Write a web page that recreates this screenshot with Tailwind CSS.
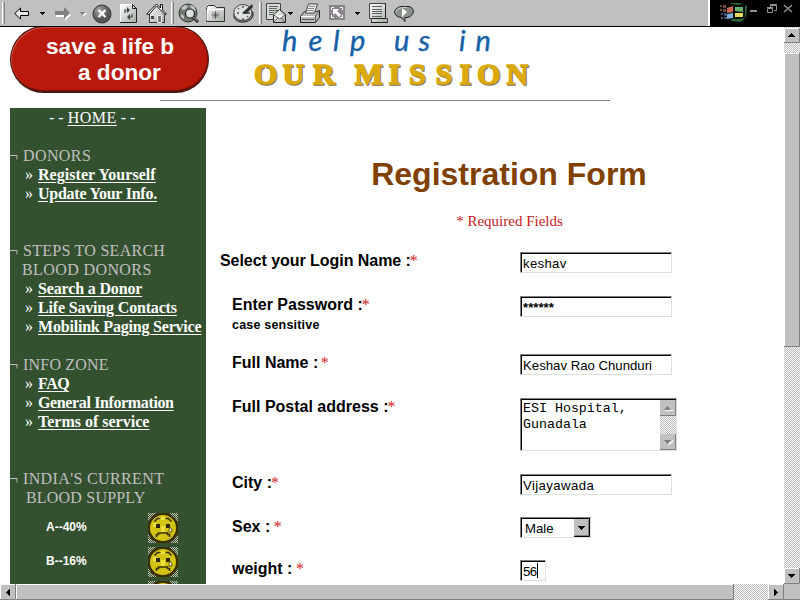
<!DOCTYPE html>
<html lang="en">
<head>
<meta charset="utf-8">
<title>Registration Form</title>
<script src="https://cdn.jsdelivr.net/npm/@tailwindcss/browser@4"></script>
</head>
<body class="w-[800px] h-[600px] overflow-hidden bg-white flex flex-col font-['Liberation_Sans',sans-serif] text-black">
<svg width="0" height="0" class="absolute">
  <defs>
    <pattern id="dither" width="2" height="2" patternUnits="userSpaceOnUse"><path fill="#fff" d="M0 0h2v2H0z"/><path fill="#b8b8b8" d="M0 0h1v1H0zM1 1h1v1H1z"/></pattern>
    <pattern id="dark" width="2" height="2" patternUnits="userSpaceOnUse"><path fill="#334a2c" d="M0 0h2v2H0z"/><path fill="#c5ccc0" d="M0 0h1v1H0zM1 1h1v1H1z"/></pattern>
    <radialGradient id="ball" cx=".35" cy=".3"><stop offset="0" stop-color="#aaa"/><stop offset="1" stop-color="#555"/></radialGradient>
    <linearGradient id="paper" x2="1" y2="1"><stop offset="0" stop-color="#fff"/><stop offset="1" stop-color="#a3aaa3"/></linearGradient>
    <symbol id="sad" viewBox="0 0 30 30">
      <path fill="url(#dark)" d="M0 0h30v30H0z"/>
      <path fill="#3a3000" d="M9 0h12l6 5 3 5v11l-4 6-5 3H9l-6-4-3-6V9l4-6z"/>
      <circle cx="15" cy="15" r="13" fill="#d3c414"/>
      <path fill="#eee03a" d="M5 10h4v4H5zM11 4h6v3h-6zM13 13h4v6h-4z"/>
      <path fill="#2c2700" d="M8 11h4v4H8zM18 11h4v4h-4z"/>
      <path fill="none" stroke="#3a3300" stroke-width="1.7" d="M6.500 8.500l3-3h3M17.500 5.500h3l3 3M8.500 24v-2.500h2V20h9v1.500h2V24"/>
      <path fill="#e8e8c8" stroke="#4a4200" stroke-width=".8" d="M22 14l2 3v2h-3v-2z"/>
    </symbol>
  </defs>
</svg>

<header class="h-[27px] shrink-0 flex border-b border-black bg-[#c0c0c0]">
  <div class="w-[708px] flex items-start pt-[2px]">
    <svg class="ml-[2px]" width="3" height="22"><path fill="#fff" d="M0 0h1v22H0z"/><path fill="#808080" d="M2 0h1v22H2z"/></svg>
    <svg class="ml-[9px]" width="16" height="23"><path fill="#e8e8e8" stroke="#000" d="M.7 11.500L6.500 6v3.500h8v4h-8V17z"/></svg>
    <svg class="ml-[10px]" width="6" height="23"><path d="M0 10h5v1H4v1H3v1H2v-1H1v-1H0z"/></svg>
    <svg class="ml-[9px]" width="17" height="23"><path fill="#fff" d="M1 10h9V7l6 6-6 6v-4H1z"/><path fill="#808080" d="M0 9h9V5l6 6-6 6v-4H0z"/></svg>
    <svg class="ml-[8px]" width="7" height="23"><path fill="#fff" d="M1 11h6l-3 3z"/><path fill="#808080" d="M0 10h5v1H4v1H3v1H2v-1H1v-1H0z"/></svg>
    <svg class="ml-[5px]" width="20" height="23"><circle cx="10" cy="12" r="9" fill="url(#ball)" stroke="#303430"/><path fill="none" stroke="#fff" stroke-width="2.200" d="M6.500 8l7 7M13.500 8l-7 7"/></svg>
    <svg class="ml-[8px]" width="18" height="23"><path fill="url(#paper)" d="M.5 2.500h12l4 4v14H.5z"/><path fill="none" stroke="#fff" d="M.5 20V2.500h12"/><path fill="none" stroke="#222" d="M12.500 2.500v4h4v14H0M12.500 2.500l4 4"/><path fill="none" stroke="#3c443c" stroke-width="1.200" d="M5 11V8h2M12 12v3h-2"/><path fill="#3c443c" d="M7 5l3 3-3 3zM10 12v6l-3-3z"/></svg>
    <svg class="ml-[8px]" width="21" height="23"><path fill="url(#paper)" stroke="#333" d="M3.500 11v9.500h15V11L10.500 3z"/><path fill="#fff" stroke="#111" d="M.7 12L10.500 2l4 4V2.500h2V8l4 4-1.500.5L10.500 4 3 12.500z"/><path fill="#777" stroke="#eee" d="M11.500 13.500h4v7h-4z"/><path fill="#444" d="M5 14h3v3H5z"/></svg>
    <svg class="ml-[4px]" width="3" height="22"><path fill="#fff" d="M0 0h1v22H0z"/><path fill="#808080" d="M2 0h1v22H2z"/></svg>
    <svg class="ml-[4px]" width="22" height="23"><circle cx="10" cy="11" r="9" fill="#737873" stroke="#383c38"/><path fill="#bfc7bf" d="M3 6l4-3 3 1-2 3-3 1zM12 3l4 1 2 5-5-2zM3 12l3 2v3l-3-2z"/><circle cx="12" cy="11.500" r="4.500" fill="#dbe1db" stroke="#222" stroke-width="1.200"/><path stroke="#222" stroke-width="3" d="M15 15l5 5"/><path stroke="#ccc" d="M15.500 15l4 4"/></svg>
    <svg class="ml-[6px]" width="21" height="23"><path fill="url(#paper)" stroke="#333" d="M.5 19.500V5.500l2-2h6l2 2h8v14z"/><path fill="none" stroke="#fff" d="M1 18.500v-11h17"/><path stroke="#444" stroke-width=".8" d="M9.500 9v8M5.500 13h8M6.500 10l6 6M12.500 10l-6 6"/></svg>
    <svg class="ml-[6px]" width="22" height="23"><path fill="#888" stroke="#222" d="M1 12v3c2 7 16 7 19-1v-4z"/><ellipse cx="9.800" cy="10.500" rx="9" ry="8" fill="#dde1dd" stroke="#444"/><path stroke="#555" stroke-width="1.500" d="M10 4v2M4 11h2M10 16v2M15 15l-1-1M5 6l1 1"/><path fill="#333" d="M9 11l10-9 1 3-7 7z"/><path stroke="#333" stroke-width="1.500" d="M10 11h7"/></svg>
    <svg class="ml-[4px]" width="3" height="22"><path fill="#fff" d="M0 0h1v22H0z"/><path fill="#808080" d="M2 0h1v22H2z"/></svg>
    <svg class="ml-[4px]" width="21" height="23"><path fill="#d6dad6" stroke="#444" d="M.5 1.500h14v16H.5z"/><path stroke="#5e665e" d="M3 4.500h9M3 6.500h8M3 8.500h9M3 10.500h5M3 12.500h4"/><path fill="url(#paper)" stroke="#222" d="M7.500 20.500v-8l6-5 6 5v8z"/><path fill="#f4f4f4" stroke="#666" d="M8 13l5.500 4 5.500-4M8 20l4-4M19 20l-4-4"/></svg>
    <svg class="ml-[1px]" width="6" height="23"><path d="M0 10h5v1H4v1H3v1H2v-1H1v-1H0z"/></svg>
    <svg class="ml-[6px]" width="20" height="23"><path fill="#b8bcb8" stroke="#222" d="M.5 14.500l4-5h12l3-1v7l-4 5H.5z"/><path fill="#f1f1f1" stroke="#444" d="M5.500 11l3-9h9l-3 9z"/><path stroke="#888" d="M9 4.500h6M8 6.500h6M7 8.500h7"/><path stroke="#fff" d="M1 14.500h14"/><path stroke="#555" d="M2 17.500h12M15.500 14l3-4M15.500 14v6"/></svg>
    <svg class="ml-[9px]" width="17" height="23"><path fill="#8a858a" d="M0 3h16v15H0z"/><path fill="none" stroke="#fff" d="M2.500 8V5.500H5M11 5.500h2.500V8M13.500 13v2.500H11M5 15.500H2.500V13"/><path fill="#fff" d="M4 7h6L8 9l4 4-2 2-4-4-2 2z"/></svg>
    <svg class="ml-[9px]" width="6" height="23"><path d="M0 10h5v1H4v1H3v1H2v-1H1v-1H0z"/></svg>
    <svg class="ml-[7px]" width="20" height="23"><path fill="url(#paper)" stroke="#444" d="M1.500 1.500h16v15h2v4h-16v-4h-2z"/><path stroke="#5e665e" d="M4 4.500h10M4 7.500h10M4 9.500h10M4 11.500h10M4 14.500h10"/><path fill="none" stroke="#222" d="M17.500 1v15.500h-14M3 20.500h17"/></svg>
    <svg class="ml-[6px]" width="21" height="23"><path fill="#8d948d" stroke="#222" d="M7 4.500h8c6 2 6 8-1 11h-3v4l-4-4C-2 14-1 6 7 4.500z"/><path fill="none" stroke="#d5d9d5" d="M2 10c1-4 6-5 11-4.500"/><path fill="#fff" d="M8 6l5 4-5 5z"/></svg>
  </div>
  <div class="w-[2px] bg-white"></div>
  <div class="w-[90px] bg-black">
    <svg width="90" height="26">
      <path fill="#734a3a" d="M10 5h2v2h-2zM13 5h3v3h-3zM10 9h2v2h-2zM13 9h3v3h-3z"/><path fill="#3b5878" d="M11 13h2v2h-2zM14 13h3v3h-3zM11 17h2v2h-2zM14 17h3v2h-3z"/>
      <path fill="#2c6535" d="M21 3h9l7 3-1 11-5 5-10-1z"/>
      <path fill="#0a0a0a" d="M16 6l7-2 4 1 8-1v14l-8 1-4 0-6 2z"/>
      <path fill="#cf6650" d="M17 8l6-2v6l-6 1z"/><path fill="#68b070" d="M25 7l8 0v5l-8-1z"/><path fill="#7dafd8" d="M17 14l6-1v5l-6 1z"/><path fill="#e8da62" d="M25 13h8v4h-8z"/>
      <path fill="#909090" d="M40 10h7v2h-7z"/><g fill="none" stroke="#909090"><path d="M60.500 8V5.500h6v5H64M60 4.500h7M57.500 8.500h5v4h-5zM57 7.500h6"/></g><path stroke="#909090" stroke-width="1.500" d="M74 5l8 7M82 5l-8 7"/>
    </svg>
  </div>
</header>

<div class="flex h-[557px] shrink-0">
  <div class="w-[784px] h-full overflow-hidden">
    <div class="h-[81px] pl-[10px] flex">
      <div class="w-[199px] h-[67px] -mt-px rounded-full bg-[#b9190b] border border-[#4a1512] border-b-2 shadow-[inset_1px_1px_0_#c9523f,inset_-1px_-1px_0_#7d1008] text-white font-bold text-[22.6px] leading-[26px] pt-[7px] whitespace-pre"><div class="pl-[35px]">save a life b</div><div class="pl-[67px]">a donor</div></div>
      <svg class="-ml-[49px] overflow-visible" width="460" height="81">
        <g transform="translate(-160 -27)">
          <text y="50.500" x="282 308.500 333 350 370 394 418.500 440 459 475.500" font-family="Lato" font-style="italic" font-size="29" fill="#1560a8" stroke="#1560a8" stroke-width=".4">help us in</text>
          <g font-family="Liberation Serif" font-weight="bold" font-size="30">
            <text y="84" x="254 282.500 313 340 354.500 388.500 409 435.500 459.500 477 506.500" fill="#6c6450" stroke="#777061" stroke-width="1.400" transform="translate(.8 1.200)">OUR MISSION</text>
            <text y="84" x="254 282.500 313 340 354.500 388.500 409 435.500 459.500 477 506.500" fill="#dba90a" stroke="#dba90a" stroke-width="1.400">OUR MISSION</text>
          </g>
          <path fill="#fff" d="M265 67h1v15h-1zM488.500 67h1v15h-1z"/>
          <path fill="#848084" d="M160 100h450v1H160z"/>
        </g>
      </svg>
    </div>
    <div class="flex pl-[10px]">
      <nav class="w-[196px] h-[476px] flex flex-col overflow-hidden shrink-0 bg-[#33502f] text-white font-['Liberation_Serif',serif] text-[16px] leading-[19px] whitespace-pre">
        <div class="pl-[39px] h-[38px] shrink-0">- - <a class="underline underline-offset-2 tracking-[0.5px]">HOME</a> - -</div>
        <div class="text-[#c0c0c0] flex shrink-0"><span class="w-[14px] -ml-px">¬</span><span class="tracking-[0.4px]">DONORS</span></div>
        <div class="pl-[15px] flex shrink-0 gap-[5px]">»<a class="underline underline-offset-2 font-bold tracking-[0.05px]">Register Yourself</a></div>
        <div class="pl-[15px] h-[57px] flex shrink-0 gap-[5px]">»<a class="underline underline-offset-2 font-bold tracking-[-0.25px]">Update Your Info.</a></div>
        <div class="text-[#c0c0c0] flex shrink-0"><span class="w-[14px] -ml-px">¬</span><span class="tracking-[0.27px]">STEPS TO SEARCH</span></div>
        <div class="text-[#c0c0c0] shrink-0 pl-[12px] tracking-[0.4px]">BLOOD DONORS</div>
        <div class="pl-[15px] flex shrink-0 gap-[5px]">»<a class="underline underline-offset-2 font-bold tracking-[-0.15px]">Search a Donor</a></div>
        <div class="pl-[15px] flex shrink-0 gap-[5px]">»<a class="underline underline-offset-2 font-bold tracking-[-0.17px]">Life Saving Contacts</a></div>
        <div class="pl-[15px] h-[38px] flex shrink-0 gap-[5px]">»<a class="underline underline-offset-2 font-bold tracking-[-0.2px]">Mobilink Paging Service</a></div>
        <div class="text-[#c0c0c0] flex shrink-0"><span class="w-[14px] -ml-px">¬</span><span class="tracking-[0.2px]">INFO ZONE</span></div>
        <div class="pl-[15px] flex shrink-0 gap-[5px]">»<a class="underline underline-offset-2 font-bold tracking-[-0.4px]">FAQ</a></div>
        <div class="pl-[15px] flex shrink-0 gap-[5px]">»<a class="underline underline-offset-2 font-bold tracking-[-0.37px]">General Information</a></div>
        <div class="pl-[15px] h-[57px] flex shrink-0 gap-[5px]">»<a class="underline underline-offset-2 font-bold">Terms of service</a></div>
        <div class="text-[#c0c0c0] flex shrink-0"><span class="w-[14px] -ml-px">¬</span><span class="tracking-[0.37px]">INDIA'S CURRENT</span></div>
        <div class="text-[#c0c0c0] shrink-0 pl-[16px] tracking-[0.2px]">BLOOD SUPPLY</div>
        <div class="mt-[6px] h-[34px] shrink-0 flex pl-[36px] font-['Liberation_Sans',sans-serif] font-bold text-[12px]"><span class="w-[102px] pt-[5px]">A--40%</span><svg width="30" height="30"><use href="#sad"/></svg></div>
        <div class="h-[34px] shrink-0 flex pl-[36px] font-['Liberation_Sans',sans-serif] font-bold text-[12px]"><span class="w-[102px] pt-[5px]">B--16%</span><svg width="30" height="30"><use href="#sad"/></svg></div>
        <div class="pl-[138px] shrink-0"><svg width="30" height="30"><use href="#sad"/></svg></div>
      </nav>
      <main class="w-[578px] pl-[14px] flex flex-col whitespace-pre">
        <h1 class="w-[578px] pt-[47px] text-center font-bold text-[32px] leading-[38px] text-[#804000]">Registration Form</h1>
        <p class="w-[578px] mt-[18px] pl-px text-center font-['Liberation_Serif',serif] text-[15px] leading-[20px] text-[#c41a24]">* Required Fields</p>
        <form class="mt-[21px] flex flex-col text-[13.200px]">
          <div class="flex h-[44px]"><label class="w-[300px] font-bold text-[16px] leading-[18px] tracking-[-0.05px]">Select your Login Name :<span class="font-['Liberation_Serif',serif] font-normal text-[#d01c24] -ml-px">*</span></label><div class="w-[152px] h-[21px] border border-[#808080] border-b-[#dfdfdf] border-r-[#dfdfdf] shadow-[inset_1px_1px_0_#000] pl-[2px] leading-[21px] tracking-[0.3px]">keshav</div></div>
          <div class="flex h-[58px] pl-[12px]"><label class="w-[288px] font-bold text-[16px] leading-[18px]">Enter Password :<span class="font-['Liberation_Serif',serif] font-normal text-[#d01c24] -ml-px">*</span><div class="text-[12.500px] leading-[22px] tracking-[0.2px]">case sensitive</div></label><div class="w-[152px] h-[21px] border border-[#808080] border-b-[#dfdfdf] border-r-[#dfdfdf] shadow-[inset_1px_1px_0_#000] pl-[2px] leading-[21px] font-bold">******</div></div>
          <div class="flex h-[44px] pl-[12px]"><label class="w-[288px] font-bold text-[16px] leading-[18px]">Full Name : <span class="font-['Liberation_Serif',serif] font-normal text-[#d01c24] -ml-[2px]">*</span></label><div class="w-[152px] h-[21px] border border-[#808080] border-b-[#dfdfdf] border-r-[#dfdfdf] shadow-[inset_1px_1px_0_#000] pl-[2px] leading-[21px]">Keshav Rao Chunduri</div></div>
          <div class="flex h-[76px] pl-[12px]"><label class="w-[288px] font-bold text-[16px] leading-[18px]">Full Postal address :<span class="font-['Liberation_Serif',serif] font-normal text-[#d01c24] -ml-px">*</span></label><div class="w-[157px] h-[53px] border border-[#808080] border-b-[#dfdfdf] border-r-[#dfdfdf] shadow-[inset_1px_1px_0_#000] pl-[2px] pt-px flex justify-between font-['Liberation_Mono',monospace] text-[13.300px] leading-[16px]"><div class="pt-px">ESI Hospital,
Gunadala</div><svg width="16" height="50"><path fill="url(#dither)" d="M0 0h16v50H0z"/><path fill="#c0c0c0" d="M0 0h16v16H0zM0 34h16v16H0z"/><path fill="none" stroke="#808080" d="M15.500 0v15.500H0M15.500 34v15.500H0"/><path fill="#fff" d="M5 10h8v1H5zM8 44l5-4v2l-4 3z"/><path fill="#808080" d="M4 10h7L7.500 6zM4 40h7l-3.500 4z"/></svg></div></div>
          <div class="flex h-[43px] pl-[12px]"><label class="w-[288px] font-bold text-[16px] leading-[18px]">City :<span class="font-['Liberation_Serif',serif] font-normal text-[#d01c24] -ml-px">*</span></label><div class="w-[152px] h-[21px] border border-[#808080] border-b-[#dfdfdf] border-r-[#dfdfdf] shadow-[inset_1px_1px_0_#000] pl-[2px] leading-[21px] tracking-[0.4px]">Vijayawada</div></div>
          <div class="flex h-[43px] pl-[12px]"><label class="w-[288px] font-bold text-[16px] leading-[20px]">Sex : <span class="font-['Liberation_Serif',serif] font-normal text-[#d01c24] -ml-px">*</span></label><div class="w-[71px] h-[21px] border border-[#808080] border-b-[#dfdfdf] border-r-[#dfdfdf] shadow-[inset_1px_1px_0_#000] pl-[4px] leading-[21px] flex justify-between">Male<svg class="mt-px" width="16" height="18"><path fill="#c0c0c0" d="M0 0h16v18H0z"/><path fill="none" stroke="#000" d="M15.500 0v17.500H0"/><path fill="none" stroke="#808080" d="M14.500 1v15.500H1"/><path d="M4 7h7v1h-1v1H9v1H8v1H7v-1H6V9H5V8H4z"/></svg></div></div>
          <div class="flex pl-[12px]"><label class="w-[288px] font-bold text-[16px] leading-[18px]">weight : <span class="font-['Liberation_Serif',serif] font-normal text-[#d01c24] -ml-px">*</span></label><div class="w-[26px] h-[21px] border border-[#808080] border-b-[#dfdfdf] border-r-[#dfdfdf] shadow-[inset_1px_1px_0_#000] pl-[2px] flex leading-[21px] tracking-[-0.5px]">56<span class="w-px h-[15px] mt-[2px] bg-black"></span></div></div>
        </form>
      </main>
    </div>
  </div>
  <svg width="16" height="557" class="shrink-0"><path fill="url(#dither)" d="M0 0h16v557H0z"/><path fill="#c0c0c0" d="M0 1h16v15H0zM0 26h16v294H0zM0 541h16v16H0z"/><path fill="none" stroke="#fff" d="M.5 15V1.500H15M.5 319V26.500H15M.5 556v-14.500H15"/><path fill="none" stroke="#808080" d="M15.500 1v14.500H0M15.500 26v293.500H0M15.500 541v15.500H0"/><path d="M4 10h7V9h-1V8H9V7H8V6H7v1H6v1H5v1H4zM4 547h7v1h-1v1H9v1H8v1H7v-1H6v-1H5v-1H4z"/></svg>
</div>
<footer class="h-[16px]"><svg width="800" height="16"><path fill="url(#dither)" d="M0 0h800v16H0z"/><path fill="#c0c0c0" d="M0 0h734v16H0zM768 0h32v16h-32z"/><path fill="none" stroke="#fff" d="M.5 15V.5H15M16.500 15V.5H733M768.500 15V.5H783"/><path fill="none" stroke="#808080" d="M15.500 0v15.500H0M733.500 0v15.500H16M783.500 0v15.500H768M784 15.500h16"/><path d="M6 8h1V7h1V6h1V5h1v7H9v-1H8v-1H7V9H6zM774 5h1v1h1v1h1v1h1v1h-1v1h-1v1h-1v1h-1z"/></svg></footer>
</body>
</html>
